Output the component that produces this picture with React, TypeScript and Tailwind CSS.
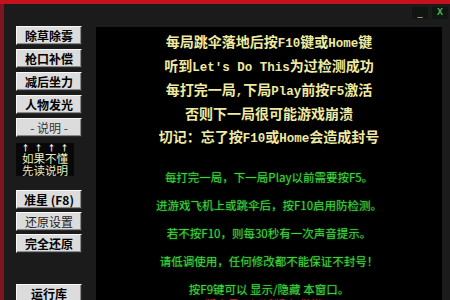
// App.tsx
const cjk = { fontFamily: '"Noto Sans CJK SC", "Liberation Sans", sans-serif' };
const mono = { fontFamily: '"Liberation Mono", "Noto Sans CJK SC", monospace' };

function Btn({ label, bold = true, muted = false }: { label: string; bold?: boolean; muted?: boolean }) {
    return (
        <div
            className={`h-[19px] w-[66px] flex items-center justify-center bg-[#dcdcdc] border border-t-[#f8f8f8] border-l-[#f8f8f8] border-r-[#2a2a2a] border-b-[#2a2a2a] shadow-[inset_-1px_-1px_0_#8a8a8a] text-[12px] leading-none ${bold ? 'font-bold text-black' : 'font-normal text-[#222]'} ${muted ? 'text-[#333]' : ''}`}
        >
            {label}
        </div>
    );
}

// latin runs in the yellow lines are a bit smaller than the hanzi
const L = ({ children }: { children: string }) => <span className="text-[12.5px]">{children}</span>;

export default function App() {
    return (
        <div className="w-[450px] h-[300px] overflow-hidden flex flex-col bg-[#1b1b1b]" style={cjk}>
            <div className="h-[4px] bg-[#c3121e] shrink-0" />
            <div className="flex flex-1 min-h-0">
                <div className="w-[4px] bg-[#7e1620] shrink-0" />
                <div className="flex-1 flex flex-col min-w-0">
                    {/* title bar */}
                    <div className="h-[22px] shrink-0 flex justify-end items-start pt-[3px] pr-[2px] gap-[4px]">
                        <div className="w-[16px] h-[12px] bg-[#0f160f] text-[#c8c8c8] text-[10px] leading-[10px] flex justify-center">_</div>
                        <div className="w-[16px] h-[12px] bg-[#0f160f] text-[#4caf50] text-[10px] leading-[12px] font-bold flex justify-center" style={mono}>X</div>
                    </div>

                    <div className="flex flex-1 min-h-0">
                        {/* left buttons */}
                        <div className="pl-[12px] w-[92px] shrink-0 flex flex-col">
                            <div className="flex flex-col gap-[4px]">
                                <Btn label="除草除雾" />
                                <Btn label="枪口补偿" />
                                <Btn label="减后坐力" />
                                <Btn label="人物发光" />
                                <Btn label="-  说明  -" bold={false} muted />
                            </div>
                            <div className="mt-[6px] w-[58px] h-[34px] bg-[#080808] flex flex-col items-center text-[11.5px] pt-[1px]">
                                <div className="text-white text-[8px] leading-[8px] font-bold tracking-[5px] pl-[5px]">↑↑↑↑</div>
                                <div className="text-[#ece8bc] leading-[12px]">如果不懂</div>
                                <div className="text-[#ece8bc] leading-[12px]">先读说明</div>
                            </div>
                            <div className="mt-[14px] flex flex-col gap-[3px]">
                                <Btn label="准星 (F8)" />
                                <Btn label="还原设置" bold={false} />
                                <Btn label="完全还原" />
                            </div>
                            <div className="mt-[31px]">
                                <Btn label="运行库" />
                            </div>
                        </div>

                        {/* black info panel */}
                        <div className="flex-1 mt-[1px] mr-[8px] bg-black flex flex-col items-center overflow-hidden">
                            <div className="pt-[5px] text-[14px] leading-[23px] font-bold text-[#eeeaa2] text-center whitespace-nowrap" style={mono}>
                                <div>每局跳伞落地后按<L>F10</L>键或<L>Home</L>键</div>
                                <div>听到<L>Let's Do This</L>为过检测成功</div>
                                <div>每打完一局<L>,</L>下局<L>Play</L>前按<L>F5</L>激活</div>
                                <div>否则下一局很可能游戏崩溃</div>
                                <div>切记：忘了按<L>F10</L>或<L>Home</L>会造成封号</div>
                            </div>
                            <div className="mt-[12px] text-[11.5px] leading-[28px] text-[#3fd43f] text-center whitespace-nowrap [text-shadow:0_0_2px_#1f7a1f]">
                                <div>每打完一局，下一局Play以前需要按F5。</div>
                                <div>进游戏飞机上或跳伞后，按F10启用防检测。</div>
                                <div>若不按F10，则每30秒有一次声音提示。</div>
                                <div>请低调使用，任何修改都不能保证不封号！</div>
                                <div className="h-[21px]">按F9键可以 显示/隐藏 本窗口。</div>
                                <div className="leading-[16px] text-[#d42a2a] [text-shadow:none]">版本号：测试版 仅供学习</div>
                            </div>
                        </div>
                    </div>
                </div>
            </div>
        </div>
    );
}
